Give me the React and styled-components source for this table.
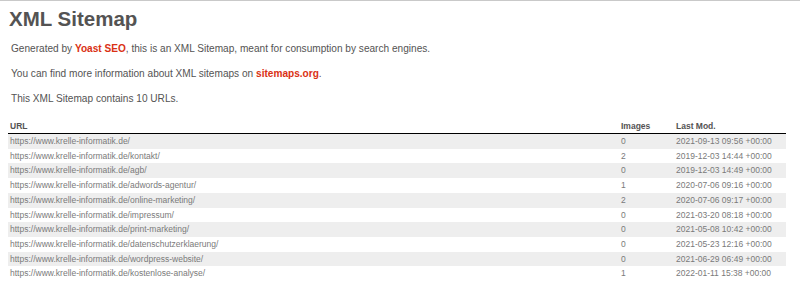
import styled, { createGlobalStyle } from "styled-components";

const GlobalStyle = createGlobalStyle`
  body {
    margin: 0;
    background: #fff;
    font-family: "Liberation Sans", Arial, Helvetica, sans-serif;
    font-size: 10px;
    color: #545353;
  }
`;

const Page = styled.div`
  border-top: 1px solid #c9c9c9;
  padding: 0 8px;
`;

const Title = styled.h1`
  margin: 6px 0 0 1px;
  font-size: 20.5px;
  line-height: 23px;
  font-weight: bold;
  color: #545353;
`;

const Expl = styled.p`
  margin: ${(p) => p.top}px 3px 0;
  line-height: 13px;
  font-size: 10.1px;
`;

const ExplLink = styled.a`
  color: #da3114;
  font-weight: bold;
  text-decoration: none;
`;

const Table = styled.table`
  margin-top: 13px;
  width: 778px;
  border: none;
  border-collapse: collapse;
`;

const Th = styled.th`
  text-align: left;
  font-size: 8.5px;
  font-weight: bold;
  color: #545353;
  padding: 0 0 0 ${(p) => p.pl || 0}px;
  height: 15px;
  border-bottom: 1px solid #000;
  width: ${(p) => p.w || "auto"};
`;

const Row = styled.tr`
  &:nth-child(odd) td {
    background-color: #eee;
  }
`;

const Td = styled.td`
  font-size: 8.5px;
  color: #7a7a7a;
  height: 14.7px;
  padding: 0 0 0 ${(p) => p.pl || 0}px;
  line-height: 14.7px;
  white-space: nowrap;
`;

const urls = [
  ["https://www.krelle-informatik.de/", 0, "2021-09-13 09:56 +00:00"],
  ["https://www.krelle-informatik.de/kontakt/", 2, "2019-12-03 14:44 +00:00"],
  ["https://www.krelle-informatik.de/agb/", 0, "2019-12-03 14:49 +00:00"],
  ["https://www.krelle-informatik.de/adwords-agentur/", 1, "2020-07-06 09:16 +00:00"],
  ["https://www.krelle-informatik.de/online-marketing/", 2, "2020-07-06 09:17 +00:00"],
  ["https://www.krelle-informatik.de/impressum/", 0, "2021-03-20 08:18 +00:00"],
  ["https://www.krelle-informatik.de/print-marketing/", 0, "2021-05-08 10:42 +00:00"],
  ["https://www.krelle-informatik.de/datenschutzerklaerung/", 0, "2021-05-23 12:16 +00:00"],
  ["https://www.krelle-informatik.de/wordpress-website/", 0, "2021-06-29 06:49 +00:00"],
  ["https://www.krelle-informatik.de/kostenlose-analyse/", 1, "2022-01-11 15:38 +00:00"],
];

export default function App() {
  return (
    <Page>
      <GlobalStyle />
      <Title>XML Sitemap</Title>
      <Expl top={12}>
        Generated by <ExplLink href="#">Yoast SEO</ExplLink>, this is an XML
        Sitemap, meant for consumption by search engines.
      </Expl>
      <Expl top={12}>
        You can find more information about XML sitemaps on{" "}
        <ExplLink href="#">sitemaps.org</ExplLink>.
      </Expl>
      <Expl top={12}>This XML Sitemap contains 10 URLs.</Expl>
      <Table>
        <thead>
          <tr>
            <Th pl={2}>URL</Th>
            <Th w="55px">Images</Th>
            <Th w="110px">Last Mod.</Th>
          </tr>
        </thead>
        <tbody>
          {urls.map(([loc, images, mod]) => (
            <Row key={loc}>
              <Td pl={2}>{loc}</Td>
              <Td>{images}</Td>
              <Td>{mod}</Td>
            </Row>
          ))}
        </tbody>
      </Table>
    </Page>
  );
}
